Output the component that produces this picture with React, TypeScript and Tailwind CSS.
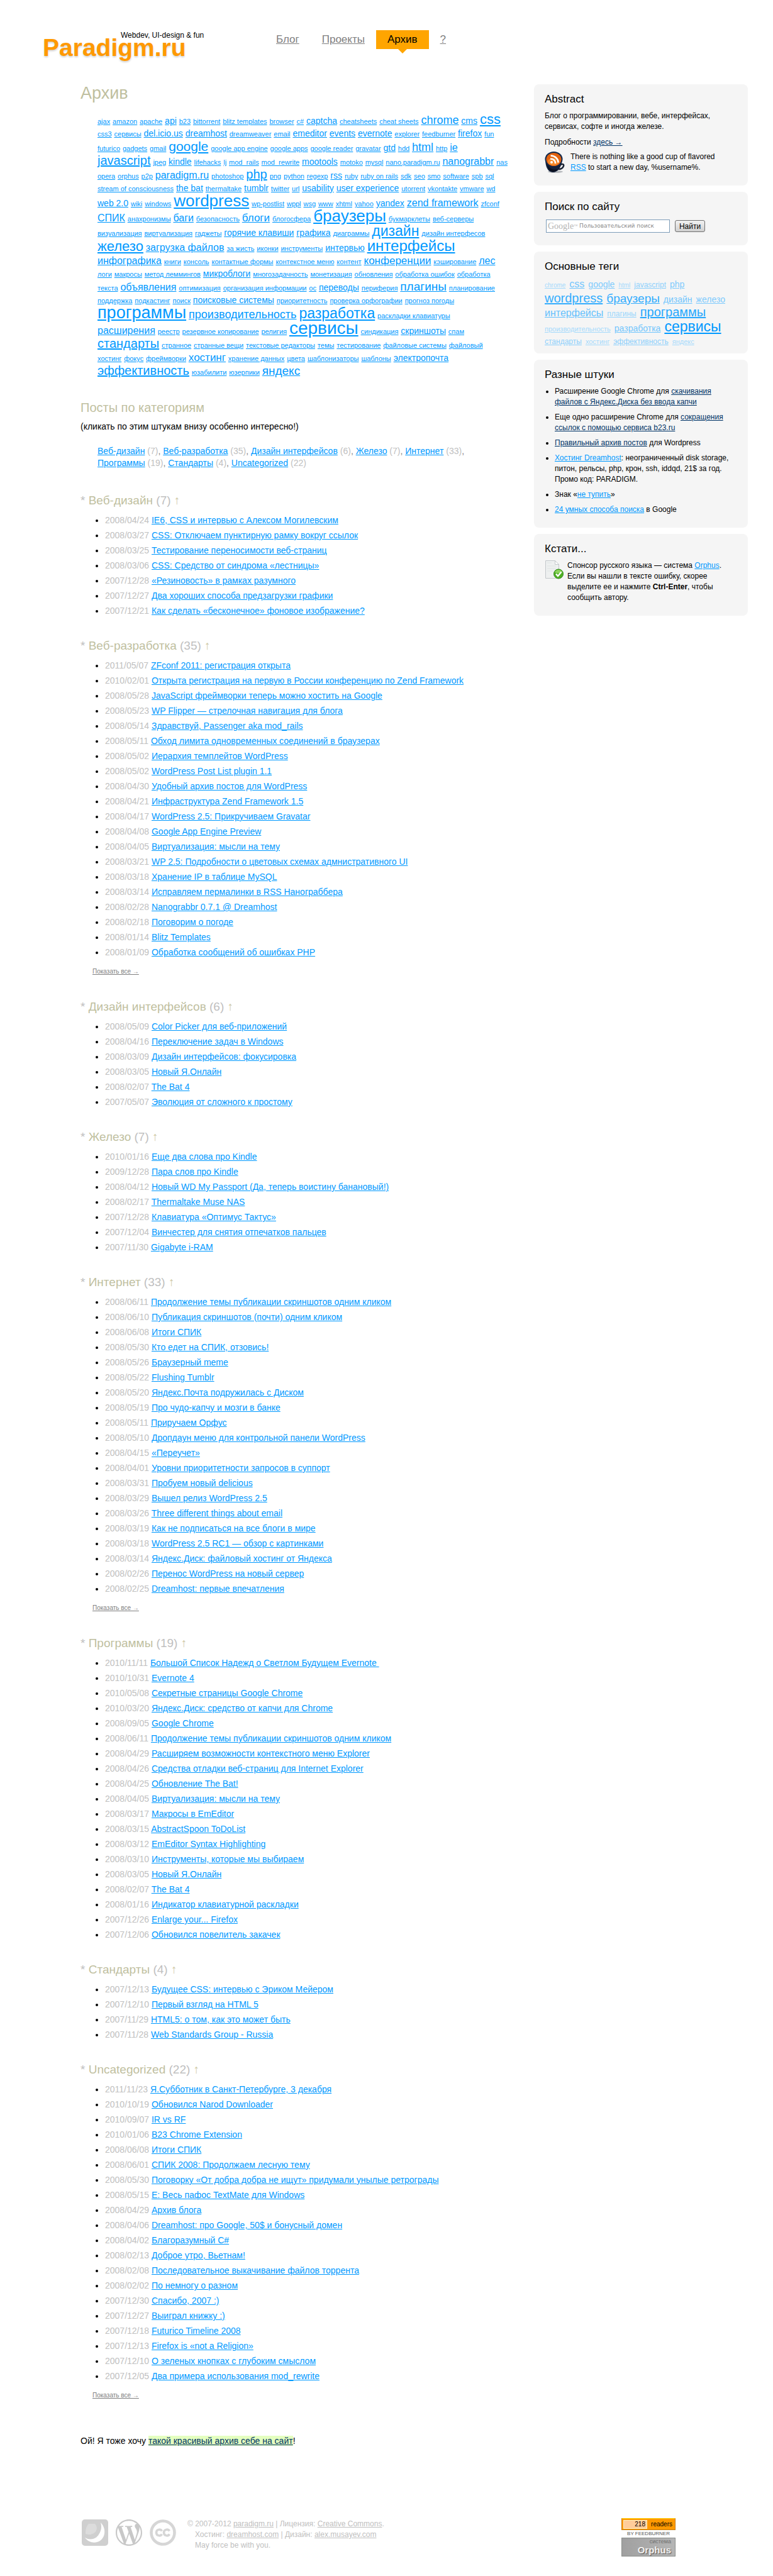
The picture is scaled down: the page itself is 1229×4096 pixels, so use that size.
import React from 'react';

const SIZES: Record<string, string> = {
  '10': 'text-[10px]',
  '11': 'text-[11px]',
  '12': 'text-[12px]',
  '14': 'text-[14px]',
  '16': 'text-[16px]',
  '17': 'text-[17px]',
  '18': 'text-[18px]',
  '19': 'text-[19px]',
  '20': 'text-[20px]',
  '21': 'text-[21px]',
  '22': 'text-[22px]',
  '23': 'text-[23px]',
  '24': 'text-[24px]',
  '26': 'text-[26px]',
  '27': 'text-[27px]',
  '28': 'text-[28px]',
};

// One string per line of the cloud; "name:size" marks a tag larger than the default.
const CLOUD = [
  'ajax|amazon|apache|api:14|b23|bittorrent|blitz templates|browser|c#|captcha:14|cheatsheets|cheat sheets|chrome:18|cms:14|css:22',
  'css3|сервисы|del.icio.us:14|dreamhost:14|dreamweaver|email|emeditor:14|events:14|evernote:14|explorer|feedburner|firefox:14|fun',
  'futurico|gadgets|gmail|google:21|google app engine|google apps|google reader|gravatar|gtd:14|hdd|html:18|http|ie:16',
  'javascript:20|jpeg|kindle:14|lifehacks|lj|mod_rails|mod_rewrite|mootools:14|motoko|mysql|nano.paradigm.ru|nanograbbr:16|nas',
  'opera|orphus|p2p|paradigm.ru:16|photoshop|php:20|png|python|regexp|rss:14|ruby|ruby on rails|sdk|seo|smo|software|spb|sql',
  'stream of consciousness|the bat:14|thermaltake|tumblr:14|twitter|url|usability:14|user experience:14|utorrent|vkontakte|vmware|wd',
  'web 2.0:14|wiki|windows|wordpress:26|wp-postlist|wppl|wsg|www|xhtml|yahoo|yandex:14|zend framework:16|zfconf',
  'СПИК:16|анахронизмы|баги:16|безопасность|блоги:17|блогосфера|браузеры:26|букмарклеты|веб-серверы',
  'визуализация|виртуализация|гаджеты|горячие клавиши:14|графика:14|диаграммы|дизайн:23|дизайн интерфесов',
  'железо:22|загрузка файлов:16|за жисть|иконки|инструменты|интервью:14|интерфейсы:24',
  'инфографика:16|книги|консоль|контактные формы|контекстное меню|контент|конференции:17|кэширование|лес:16',
  'логи|макросы|метод леммингов|микроблоги:14|многозадачность|монетизация|обновления|обработка ошибок|обработка',
  'текста|объявления:16|оптимизация|организация информации|ос|переводы:14|периферия|плагины:19|планирование',
  'поддержка|подкастинг|поиск|поисковые системы:14|приоритетность|проверка орфографии|прогноз погоды',
  'программы:27|производительность:18|разработка:23|раскладки клавиатуры',
  'расширения:16|реестр|резервное копирование|религия|сервисы:28|синдикация|скриншоты:14|спам',
  'стандарты:20|странное|странные вещи|текстовые редакторы|темы|тестирование|файловые системы|файловый',
  'хостинг|фокус|фреймворки|хостинг:17|хранение данных|цвета|шаблонизаторы|шаблоны|электропочта:14',
  'эффективность:20|юзабилити|юзерпики|яндекс:19',
];

type Section = { name: string; count: number; more?: boolean; posts: string[] };

const SECTIONS: Section[] = [
  {
    name: 'Веб-дизайн',
    count: 7,
    posts: [
      '2008/04/24 IE6, CSS и интервью с Алексом Могилевским',
      '2008/03/27 CSS: Отключаем пунктирную рамку вокруг ссылок',
      '2008/03/25 Тестирование переносимости веб-страниц',
      '2008/03/06 CSS: Средство от синдрома «лестницы»',
      '2007/12/28 «Резиновость» в рамках разумного',
      '2007/12/27 Два хороших способа предзагрузки графики',
      '2007/12/21 Как сделать «бесконечное» фоновое изображение?',
    ],
  },
  {
    name: 'Веб-разработка',
    count: 35,
    more: true,
    posts: [
      '2011/05/07 ZFconf 2011: регистрация открыта',
      '2010/02/01 Открыта регистрация на первую в России конференцию по Zend Framework',
      '2008/05/28 JavaScript фреймворки теперь можно хостить на Google',
      '2008/05/23 WP Flipper — стрелочная навигация для блога',
      '2008/05/14 Здравствуй, Passenger aka mod_rails',
      '2008/05/11 Обход лимита одновременных соединений в браузерах',
      '2008/05/02 Иерархия темплейтов WordPress',
      '2008/05/02 WordPress Post List plugin 1.1',
      '2008/04/30 Удобный архив постов для WordPress',
      '2008/04/21 Инфраструктура Zend Framework 1.5',
      '2008/04/17 WordPress 2.5: Прикручиваем Gravatar',
      '2008/04/08 Google App Engine Preview',
      '2008/04/05 Виртуализация: мысли на тему',
      '2008/03/21 WP 2.5: Подробности о цветовых схемах адмнистративного UI',
      '2008/03/18 Хранение IP в таблице MySQL',
      '2008/03/14 Исправляем пермалинки в RSS Нанограббера',
      '2008/02/28 Nanograbbr 0.7.1 @ Dreamhost',
      '2008/02/18 Поговорим о погоде',
      '2008/01/14 Blitz Templates',
      '2008/01/09 Обработка сообщений об ошибках PHP',
    ],
  },
  {
    name: 'Дизайн интерфейсов',
    count: 6,
    posts: [
      '2008/05/09 Color Picker для веб-приложений',
      '2008/04/16 Переключение задач в Windows',
      '2008/03/09 Дизайн интерфейсов: фокусировка',
      '2008/03/05 Новый Я.Онлайн',
      '2008/02/07 The Bat 4',
      '2007/05/07 Эволюция от сложного к простому',
    ],
  },
  {
    name: 'Железо',
    count: 7,
    posts: [
      '2010/01/16 Еще два слова про Kindle',
      '2009/12/28 Пара слов про Kindle',
      '2008/04/12 Новый WD My Passport (Да, теперь воистину банановый!)',
      '2008/02/17 Thermaltake Muse NAS',
      '2007/12/28 Клавиатура «Оптимус Тактус»',
      '2007/12/04 Винчестер для снятия отпечатков пальцев',
      '2007/11/30 Gigabyte i-RAM',
    ],
  },
  {
    name: 'Интернет',
    count: 33,
    more: true,
    posts: [
      '2008/06/11 Продолжение темы публикации скриншотов одним кликом',
      '2008/06/10 Публикация скриншотов (почти) одним кликом',
      '2008/06/08 Итоги СПИК',
      '2008/05/30 Кто едет на СПИК, отзовись!',
      '2008/05/26 Браузерный meme',
      '2008/05/22 Flushing Tumblr',
      '2008/05/20 Яндекс.Почта подружилась с Диском',
      '2008/05/19 Про чудо-капчу и мозги в банке',
      '2008/05/11 Приручаем Орфус',
      '2008/05/10 Дропдаун меню для контрольной панели WordPress',
      '2008/04/15 «Переучет»',
      '2008/04/01 Уровни приоритетности запросов в суппорт',
      '2008/03/31 Пробуем новый delicious',
      '2008/03/29 Вышел релиз WordPress 2.5',
      '2008/03/26 Three different things about email',
      '2008/03/19 Как не подписаться на все блоги в мире',
      '2008/03/18 WordPress 2.5 RC1 — обзор с картинками',
      '2008/03/14 Яндекс.Диск: файловый хостинг от Яндекса',
      '2008/02/26 Перенос WordPress на новый сервер',
      '2008/02/25 Dreamhost: первые впечатления',
    ],
  },
  {
    name: 'Программы',
    count: 19,
    posts: [
      '2010/11/11 Большой Список Надежд о Светлом Будущем Evernote\u00a0',
      '2010/10/31 Evernote 4',
      '2010/05/08 Секретные страницы Google Chrome',
      '2010/03/20 Яндекс.Диск: средство от капчи для Chrome',
      '2008/09/05 Google Chrome',
      '2008/06/11 Продолжение темы публикации скриншотов одним кликом',
      '2008/04/29 Расширяем возможности контекстного меню Explorer',
      '2008/04/26 Средства отладки веб-страниц для Internet Explorer',
      '2008/04/25 Обновление The Bat!',
      '2008/04/05 Виртуализация: мысли на тему',
      '2008/03/17 Макросы в EmEditor',
      '2008/03/15 AbstractSpoon ToDoList',
      '2008/03/12 EmEditor Syntax Highlighting',
      '2008/03/10 Инструменты, которые мы выбираем',
      '2008/03/05 Новый Я.Онлайн',
      '2008/02/07 The Bat 4',
      '2008/01/16 Индикатор клавиатурной раскладки',
      '2007/12/26 Enlarge your... Firefox',
      '2007/12/06 Обновился повелитель закачек',
    ],
  },
  {
    name: 'Стандарты',
    count: 4,
    posts: [
      '2007/12/13 Будущее CSS: интервью с Эриком Мейером',
      '2007/12/10 Первый взгляд на HTML 5',
      '2007/11/29 HTML5: о том, как это может быть',
      '2007/11/28 Web Standards Group - Russia',
    ],
  },
  {
    name: 'Uncategorized',
    count: 22,
    more: true,
    posts: [
      '2011/11/23 Я.Субботник в Санкт-Петербурге, 3 декабря',
      '2010/10/19 Обновился Narod Downloader',
      '2010/09/07 IR vs RF',
      '2010/01/06 B23 Chrome Extension',
      '2008/06/08 Итоги СПИК',
      '2008/06/01 СПИК 2008: Продолжаем лесную тему',
      '2008/05/30 Поговорку «От добра добра не ищут» придумали унылые ретрограды',
      '2008/05/15 E: Весь пафос TextMate для Windows',
      '2008/04/29 Архив блога',
      '2008/04/06 Dreamhost: про Google, 50$ и бонусный домен',
      '2008/04/02 Благоразумный C#',
      '2008/02/13 Доброе утро, Вьетнам!',
      '2008/02/08 Последовательное выкачивание файлов торрента',
      '2008/02/02 По немногу о разном',
      '2007/12/30 Спасибо, 2007 :)',
      '2007/12/27 Выиграл книжку :)',
      '2007/12/18 Futurico Timeline 2008',
      '2007/12/13 Firefox is «not a Religion»',
      '2007/12/10 О зеленых кнопках с глубоким смыслом',
      '2007/12/05 Два примера использования mod_rewrite',
    ],
  },
];

const SIDE_TAGS: [string, string, string][][] = [
  [
    ['chrome', '10', 'text-[#a6dafc]'],
    ['css', '16', 'text-[#73c6fd]'],
    ['google', '14', 'text-[#80cbfd]'],
    ['html', '10', 'text-[#a6dafc]'],
    ['javascript', '12', 'text-[#8dd0fc]'],
    ['php', '14', 'text-[#80cbfd]'],
  ],
  [
    ['wordpress', '20', 'text-[#33adfe]'],
    ['браузеры', '19', 'text-[#33adfe]'],
    ['дизайн', '14', 'text-[#73c6fd]'],
    ['железо', '14', 'text-[#80cbfd]'],
  ],
  [
    ['интерфейсы', '16', 'text-[#66c1fd]'],
    ['плагины', '12', 'text-[#99d5fc]'],
    ['программы', '20', 'text-[#26a8fe]'],
  ],
  [
    ['производительность', '11', 'text-[#a6dafc]'],
    ['разработка', '14', 'text-[#73c6fd]'],
    ['сервисы', '23', 'text-[#0099ff]'],
  ],
  [
    ['стандарты', '12', 'text-[#8dd0fc]'],
    ['хостинг', '11', 'text-[#a6dafc]'],
    ['эффективность', '12', 'text-[#8dd0fc]'],
    ['яндекс', '11', 'text-[#a6dafc]'],
  ],
];

const LINK = 'text-[#0099ff] underline';
const SEEN = 'text-[#003366] underline';

function Box({ title, children, bottom = 'pb-5' }: { title: string; children: React.ReactNode; bottom?: string }) {
  return (
    <section className={`rounded-[8px] bg-[#f5f5f5] px-[17px] pt-3 ${bottom}`}>
      <h2 className="mb-1.5 text-[17px] leading-6">{title}</h2>
      {children}
    </section>
  );
}

function CupIcon() {
  return (
    <svg width="32" height="34" viewBox="0 0 32 34" className="shrink-0" aria-hidden="true">
      <ellipse cx="17" cy="32" rx="12" ry="2" fill="#b9bcc0" />
      <path d="M25 21c3-2 6-1 5 2-1 3-4 5-8 5" fill="none" stroke="#1b2333" strokeWidth="2.4" />
      <path d="M1 12c0 12 4 21 12 21s14-8 15-21z" fill="#14213a" />
      <path d="M4 20c1 7 4 12 9 12 3 0 6-1 8-4-8 2-14-1-17-8z" fill="#0a1020" />
      <ellipse cx="14.500" cy="12" rx="14" ry="12" fill="#10294e" />
      <ellipse cx="14.500" cy="12.500" rx="12" ry="10.500" fill="#e2620f" />
      <ellipse cx="14" cy="16" rx="9" ry="6" fill="#f58a2c" />
      <circle cx="11" cy="17" r="2" fill="#fff" />
      <path d="M9 11.500c5 0 8 3 8 7.500M9.500 6.500c7 0 12 5 12 11" fill="none" stroke="#fff" strokeWidth="2.600" />
    </svg>
  );
}

function PageCheckIcon() {
  return (
    <svg width="30" height="30" viewBox="0 0 30 30" className="shrink-0" aria-hidden="true">
      <path d="M1.500.5h15l6 6v22h-21z" fill="#eef0f0" stroke="#c3c8cb" />
      <path d="M16.500.5v6h6z" fill="#fff" stroke="#c3c8cb" />
      <path d="M4 4h7M4 9h14M4 13h14M4 17h9" stroke="#dfe3e3" />
      <circle cx="22" cy="21.500" r="7.500" fill="#4fae22" stroke="#2f8a1c" />
      <path d="M16 19a6.500 6.500 0 0 1 12 0c-4 2-8 2-12 0z" fill="#8bd35a" />
      <path d="M18 21.500l3 3.500 5.500-6.500" fill="none" stroke="#fff" strokeWidth="2.400" />
    </svg>
  );
}

function DreamhostIcon() {
  return (
    <svg width="42" height="42" viewBox="0 0 42 42" aria-hidden="true">
      <rect width="42" height="42" rx="5" fill="#cfcfcf" />
      <path d="M30 5c9 9 8 23-1 29-8 5-18 3-24-5 9 5 18 2 22-5 4-6 5-12 3-19z" fill="#fff" />
      <path d="M11 7h10c5 5 3 14-4 16-4 2-8 1-11 0 0-6 1-12 5-16z" fill="#dcdcdc" />
    </svg>
  );
}

function WordpressIcon() {
  return (
    <svg width="42" height="42" viewBox="0 0 24 24" fill="#c8c8c8" aria-hidden="true">
      <path d="M21.469 6.825c.84 1.537 1.318 3.300 1.318 5.175 0 3.979-2.156 7.456-5.363 9.325l3.295-9.527c.615-1.540.82-2.771.82-3.864 0-.405-.026-.780-.070-1.110m-7.981.105c.647-.030 1.232-.105 1.232-.105.582-.075.514-.930-.067-.899 0 0-1.755.135-2.880.135-1.064 0-2.850-.150-2.850-.150-.585-.030-.661.855-.075.885 0 0 .540.061 1.125.090l1.680 4.605-2.370 7.080L5.354 6.900c.649-.030 1.234-.100 1.234-.100.585-.075.516-.930-.065-.896 0 0-1.746.138-2.874.138-.200 0-.438-.008-.690-.015C4.911 3.150 8.235 1.215 12 1.215c2.809 0 5.365 1.072 7.286 2.833-.046-.003-.091-.009-.141-.009-1.060 0-1.812.923-1.812 1.914 0 .890.513 1.643 1.060 2.531.411.720.890 1.643.890 2.977 0 .915-.354 1.994-.821 3.479l-1.075 3.585-3.900-11.610.001.014zM12 22.784c-1.059 0-2.081-.153-3.048-.437l3.237-9.406 3.315 9.087c.024.053.050.101.078.149-1.120.393-2.325.607-3.582.607M1.211 12c0-1.564.336-3.050.935-4.390L7.290 21.709C3.694 19.960 1.212 16.271 1.211 12M12 0C5.385 0 0 5.385 0 12s5.385 12 12 12 12-5.385 12-12S18.615 0 12 0" />
    </svg>
  );
}

function CreativeCommonsIcon() {
  return (
    <svg width="42" height="42" viewBox="0 0 42 42" fill="none" stroke="#d6d6d6" aria-hidden="true">
      <circle cx="21" cy="21" r="18.500" strokeWidth="4.600" />
      <path d="M19.500 18.500c-2.500-4-9-2.500-9 2.500s6.500 6.500 9 2.500M31.500 18.500c-2.500-4-9-2.500-9 2.500s6.500 6.500 9 2.500" strokeWidth="3.600" />
    </svg>
  );
}

function Post({ text }: { text: string }) {
  return (
    <li>
      <time className="text-[#c0c0c0]">{text.slice(0, 10)}</time>{' '}
      <a href="#" className={LINK}>{text.slice(11)}</a>
    </li>
  );
}

export default function App() {
  return (
    <div className="bg-white font-['Liberation_Sans',Arial,sans-serif] text-[14px] text-black">
      <header className="flex items-start pt-12 pb-[39px]">
        <div className="relative mt-2 w-[421px] pl-[68px]">
          <a
            href="#"
            className="block text-[39px] leading-none font-bold text-[#ff9900] [text-shadow:0_2px_3px_rgba(0,0,0,0.180)]"
          >
            Paradigm.ru
          </a>
          <span className="absolute -top-2 left-[192px] text-[12px] leading-4 whitespace-nowrap">
            Webdev, UI-design &amp; fun
          </span>
        </div>
        <nav className="flex text-[17px] leading-[30px] text-[#808080]">
          <a href="#" className="px-[18px] underline">Блог</a>
          <a href="#" className="px-[18px] underline">Проекты</a>
          <a href="#" className="relative bg-[#ffa500] px-[18px] text-black">
            Архив
            <svg width="14" height="7" className="absolute top-full left-1/2 -translate-x-1/2" aria-hidden="true">
              <path d="M0 0h14l-7 7z" fill="#ffa500" />
            </svg>
          </a>
          <a href="#" className="px-[18px] underline">?</a>
        </nav>
      </header>

      <div className="flex items-start pr-10">
        <main className="min-w-0 flex-1 pl-32">
          <h1 className="text-[27px] leading-7 text-[#bfbf9f]">Архив</h1>
          <div className="mt-[18px] pl-[27px] leading-[19px] whitespace-nowrap">
            {CLOUD.map((row) => (
              <p key={row}>
                {row.split('|').map((tag) => {
                  const [name, size = '11'] = tag.split(':');
                  return (
                    <React.Fragment key={tag}>
                      <a href="#" className={`${LINK} ${SIZES[size]}`}>{name}</a>
                      <span> </span>
                    </React.Fragment>
                  );
                })}
              </p>
            ))}
          </div>

          <h2 className="mt-[34px] text-[20px] leading-6 text-[#bfbf9f]">Посты по категориям</h2>
          <p className="mt-2 leading-5">(кликать по этим штукам внизу особенно интересно!)</p>
          <p className="mt-5 w-[630px] pl-[27px] leading-[19px] text-[#808080]">
            {SECTIONS.map((s, i) => (
              <React.Fragment key={s.name}>
                <a href="#" className={LINK}>{s.name}</a>{' '}
                <span className="text-[#c0c0c0]">({s.count})</span>
                {i < SECTIONS.length - 1 && ', '}
              </React.Fragment>
            ))}
          </p>

          <div className="mt-[38px] flex flex-col gap-8">
            {SECTIONS.map((s) => (
              <section key={s.name}>
                <h3 className="mb-[7px] text-[19px] leading-6 text-[#c0c0c0]">
                  * <span className="text-[#bfbf9f]">{s.name}</span> ({s.count}){' '}
                  <a href="#" className="text-[#cfc9a6]">↑</a>
                </h3>
                <ul className="list-disc pl-[39px] leading-6">
                  {s.posts.map((p) => (
                    <Post key={p} text={p} />
                  ))}
                </ul>
                {s.more && (
                  <p className="mt-[11px] mb-1 pl-[19px] text-[10px] leading-4">
                    <a href="#" className="text-[#808080] underline">Показать все →</a>
                  </p>
                )}
              </section>
            ))}
          </div>

          <p className="mt-[50px] leading-5">
            Ой! Я тоже хочу{' '}
            <a href="#" className={`${SEEN} bg-[#e4ffbf]`}>такой красивый архив себе на сайт</a>!
          </p>
        </main>

        <aside className="flex w-[340px] shrink-0 flex-col gap-[10px] text-[12px] leading-[17px]">
          <Box title="Abstract">
            <p>
              Блог о программировании, вебе, интерфейсах,
              <br />
              сервисах, софте и иногда железе.
            </p>
            <p className="mt-2">
              Подробности <a href="#" className={SEEN}>здесь →</a>
            </p>
            <div className="mt-1.5 flex gap-[9px]">
              <CupIcon />
              <p>
                There is nothing like a good cup of flavored
                <br />
                <a href="#" className={LINK}>RSS</a> to start a new day, %username%.
              </p>
            </div>
          </Box>

          <Box title="Поиск по сайту">
            <form className="mt-2 ml-0.5 flex items-center gap-2" onSubmit={(e) => e.preventDefault()}>
              <label className="flex h-[21px] w-[197px] items-center gap-[3px] border border-[#7e9db9] bg-white pl-0.5">
                <span className="font-['Liberation_Serif',serif] text-[14px] leading-4 text-[#b4b4b4]">
                  Google<sup className="text-[6px]">™</sup>
                </span>
                <input
                  type="text"
                  placeholder="Пользовательский поиск"
                  className="w-full min-w-0 font-['DejaVu_Sans',sans-serif] text-[9px] outline-none placeholder:text-[#8a8a8a]"
                />
              </label>
              <button
                type="submit"
                className="h-[19px] w-12 rounded-[3px] border border-[#707070] bg-gradient-to-b from-[#f2f2f2] to-[#cfcfcf] text-[12px] leading-4"
              >
                Найти
              </button>
            </form>
          </Box>

          <Box title="Основные теги" bottom="pb-[9px]">
            <div className="text-[12px] leading-5">
              {SIDE_TAGS.map((row, i) => (
                <p key={i} className="flex items-baseline gap-1.5 whitespace-nowrap">
                  {row.map(([name, size, color]) => (
                    <a key={name} href="#" className={`underline ${SIZES[size]} ${color}`}>{name}</a>
                  ))}
                </p>
              ))}
            </div>
          </Box>

          <Box title="Разные штуки">
            <ul className="flex list-disc flex-col gap-[7px] pl-4">
              <li>
                Расширение Google Chrome для{' '}
                <a href="#" className={SEEN}>скачивания<br />файлов с Яндекс.Диска без ввода капчи</a>
              </li>
              <li>
                Еще одно расширение Chrome для{' '}
                <a href="#" className={SEEN}>сокращения<br />ссылок с помощью сервиса b23.ru</a>
              </li>
              <li>
                <a href="#" className={SEEN}>Правильный архив постов</a> для Wordpress
              </li>
              <li>
                <a href="#" className={LINK}>Хостинг Dreamhost</a>: неограниченный disk storage,
                <br />
                питон, рельсы, php, крон, ssh, iddqd, 21$ за год.
                <br />
                Промо код: PARADIGM.
              </li>
              <li>
                Знак «<a href="#" className={LINK}>не тупить</a>»
              </li>
              <li>
                <a href="#" className={LINK}>24 умных способа поиска</a> в Google
              </li>
            </ul>
          </Box>

          <Box title="Кстати...">
            <div className="flex gap-1.5">
              <PageCheckIcon />
              <p>
                Спонсор русского языка — система <a href="#" className={LINK}>Orphus</a>.
                <br />
                Если вы нашли в тексте ошибку, скорее
                <br />
                выделите ее и нажмите <b>Ctrl-Enter</b>, чтобы
                <br />
                сообщить автору.
              </p>
            </div>
          </Box>
        </aside>
      </div>

      <footer className="mt-[113px] flex items-start justify-between pr-[155px] pb-[29px] pl-[130px]">
        <div className="flex">
          <div className="mt-0.5 flex gap-3">
            <a href="#" aria-label="Dreamhost"><DreamhostIcon /></a>
            <a href="#" aria-label="WordPress"><WordpressIcon /></a>
            <a href="#" aria-label="Creative Commons"><CreativeCommonsIcon /></a>
          </div>
          <div className="ml-[30px] pt-px text-[12px] leading-[17px] text-[#c0c0c0]">
            <p className="-indent-3">
              © 2007-2012 <a href="#" className="underline">paradigm.ru</a> | Лицензия:{' '}
              <a href="#" className="underline">Creative Commons</a>.
            </p>
            <p>
              Хостинг: <a href="#" className="underline">dreamhost.com</a> | Дизайн:{' '}
              <a href="#" className="underline">alex.musayev.com</a>
            </p>
            <p>May force be with you.</p>
          </div>
        </div>
        <div className="w-[86px]">
          <a href="#" className="block">
            <span className="flex h-[19px] items-center justify-between border border-[#c27a10] border-t-[#ffcc00] bg-[#ff9900] pr-1 pl-0.5 text-[10px] leading-3">
              <span className="w-[38px] border border-[#fff0c0] bg-[#ffcc99] pr-0.5 text-right">218</span>
              readers
            </span>
            <span className="block pt-px text-center text-[8px] leading-[10px] whitespace-nowrap text-[#555555]">BY FEEDBURNER</span>
          </a>
          <a
            href="#"
            className="mt-px flex h-[30px] flex-col items-end border border-[#8a8d8a] bg-gradient-to-r from-[#a0a0a0] to-[#b5b5b5] pr-1.5"
          >
            <span className="text-[9px] leading-[11px] text-[#707070]">система</span>
            <span className="text-[15px] leading-4 font-bold text-[#f2f2f2] [text-shadow:1px_1px_1px_#555]">Orphus</span>
          </a>
        </div>
      </footer>
    </div>
  );
}
